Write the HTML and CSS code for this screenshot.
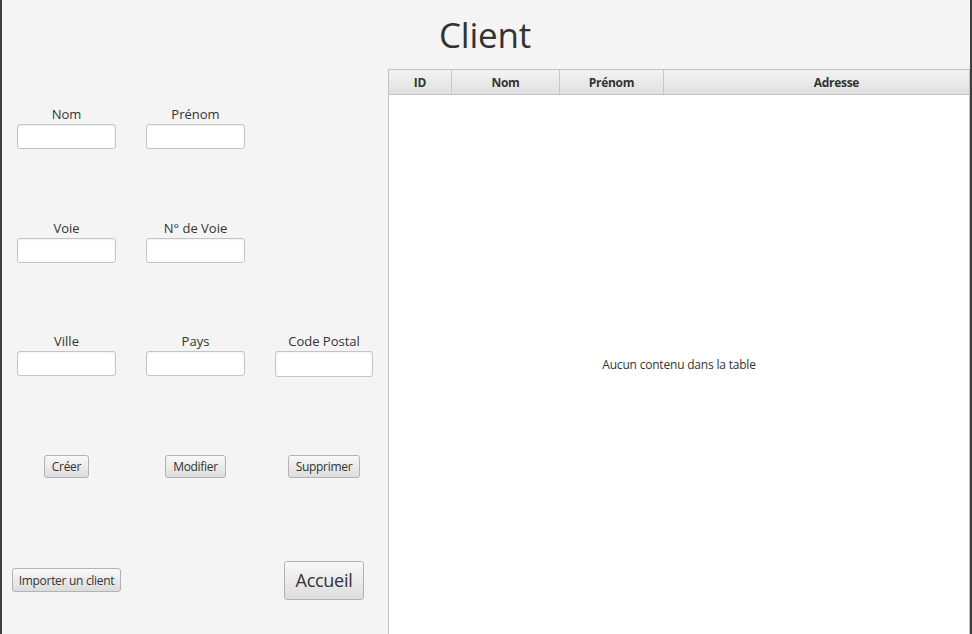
FILE: index.html
```html
<!DOCTYPE html>
<html lang="fr">
<head>
<meta charset="utf-8">
<title>Client</title>
<link rel="stylesheet" href="styles.css">
</head>
<body>
<div class="window">
  <header class="top">
    <h1 class="title">Client</h1>
  </header>
  <main class="main">
    <section class="form">
      <div class="cell"><label class="lbl">Nom</label><input class="field" type="text"></div>
      <div class="cell"><label class="lbl">Prénom</label><input class="field" type="text"></div>
      <div class="cell"></div>

      <div class="cell"><label class="lbl">Voie</label><input class="field" type="text"></div>
      <div class="cell"><label class="lbl">N° de Voie</label><input class="field" type="text"></div>
      <div class="cell"></div>

      <div class="cell"><label class="lbl">Ville</label><input class="field" type="text"></div>
      <div class="cell"><label class="lbl">Pays</label><input class="field" type="text"></div>
      <div class="cell"><label class="lbl">Code Postal</label><input class="field field-wide" type="text"></div>

      <div class="cell"><button class="btn">Créer</button></div>
      <div class="cell"><button class="btn">Modifier</button></div>
      <div class="cell"><button class="btn">Supprimer</button></div>

      <div class="cell cell-mid"><button class="btn btn-import">Importer un client</button></div>
      <div class="cell"></div>
      <div class="cell cell-mid"><button class="btn btn-big">Accueil</button></div>
    </section>
    <section class="table">
      <div class="thead">
        <div class="th th-id">ID</div>
        <div class="th th-nom">Nom</div>
        <div class="th th-prenom">Prénom</div>
        <div class="th th-adresse">Adresse</div>
      </div>
      <div class="tbody">
        <span class="placeholder">Aucun contenu dans la table</span>
      </div>
    </section>
  </main>
</div>
</body>
</html>
```

FILE: styles.css
```css
html, body {
  margin: 0;
  padding: 0;
  background: #f4f4f4;
}

body {
  font-family: "Open Sans", "Noto Sans", sans-serif;
  color: #333333;
  overflow: hidden;
}

.window {
  width: 972px;
  height: 634px;
  box-sizing: border-box;
  border-left: 2px solid #3e3e3e;
  border-right: 2px solid #3e3e3e;
  background: #f4f4f4;
  display: flex;
  flex-direction: column;
}

.top {
  height: 69px;
  display: flex;
  justify-content: center;
  flex: none;
}

.title {
  margin: 0;
  padding-top: 12px;
  padding-right: 2px;
  font-weight: 400;
  font-size: 35px;
  line-height: 46px;
  color: #333333;
  letter-spacing: -0.2px;
}

.main {
  flex: 1;
  display: flex;
  min-height: 0;
}

.form {
  width: 386px;
  flex: none;
  display: grid;
  grid-template-columns: 129px 129px 128px;
  grid-template-rows: 38px 114px 113px 121px 105px 40px;
  box-sizing: border-box;
}

.form::before {
  content: "";
  grid-column: 1 / -1;
}

.cell {
  display: flex;
  flex-direction: column;
  align-items: center;
}

.cell-mid {
  justify-content: center;
  height: 40px;
}

.lbl {
  font-size: 13px;
  line-height: 15px;
  padding-bottom: 2px;
  color: #333333;
  letter-spacing: 0;
}

.field {
  width: 99px;
  height: 25px;
  box-sizing: border-box;
  border: 1px solid #c4c4c4;
  border-radius: 3px;
  background: #ffffff;
  box-shadow: inset 0 1px 2px rgba(0, 0, 0, 0.06);
  margin: 0;
  padding: 0 6px;
  font: inherit;
}

.field-wide {
  width: 98px;
  height: 26px;
}

.btn {
  font-family: "Open Sans", "Noto Sans", sans-serif;
  font-size: 12px;
  line-height: 15px;
  color: #333333;
  height: 23px;
  box-sizing: border-box;
  padding: 0 7px;
  border: 1px solid #b2b2b2;
  border-radius: 3px;
  background: linear-gradient(#f9f9f9, #dcdcdc);
  margin: 0;
  letter-spacing: -0.3px;
}

.btn-import {
  height: 24px;
  padding: 0 6px;
}

.btn-big {
  font-size: 18px;
  line-height: 22px;
  height: 39px;
  padding: 0 11px;
  letter-spacing: -0.3px;
}

.table {
  flex: 1;
  display: flex;
  flex-direction: column;
  border-left: 1px solid #c3c3c3;
  border-top: 1px solid #c3c3c3;
  border-right: 1px solid #c3c3c3;
  background: #ffffff;
  min-width: 0;
}

.thead {
  display: flex;
  height: 24px;
  flex: none;
  background: linear-gradient(#f3f3f3, #e0e0e0);
  border-bottom: 1px solid #c3c3c3;
}

.th {
  box-sizing: border-box;
  font-size: 12px;
  font-weight: 700;
  line-height: 25px;
  text-align: center;
  color: #333333;
  border-right: 1px solid #c8c8c8;
  letter-spacing: -0.3px;
}

.th-id { width: 63px; }
.th-nom { width: 108px; }
.th-prenom { width: 104px; }
.th-adresse { flex: 1; border-right: none; padding-left: 40px; }

.tbody {
  flex: 1;
  display: flex;
  align-items: center;
  justify-content: center;
}

.placeholder {
  font-size: 12px;
  color: #333333;
  letter-spacing: -0.2px;
}
```
